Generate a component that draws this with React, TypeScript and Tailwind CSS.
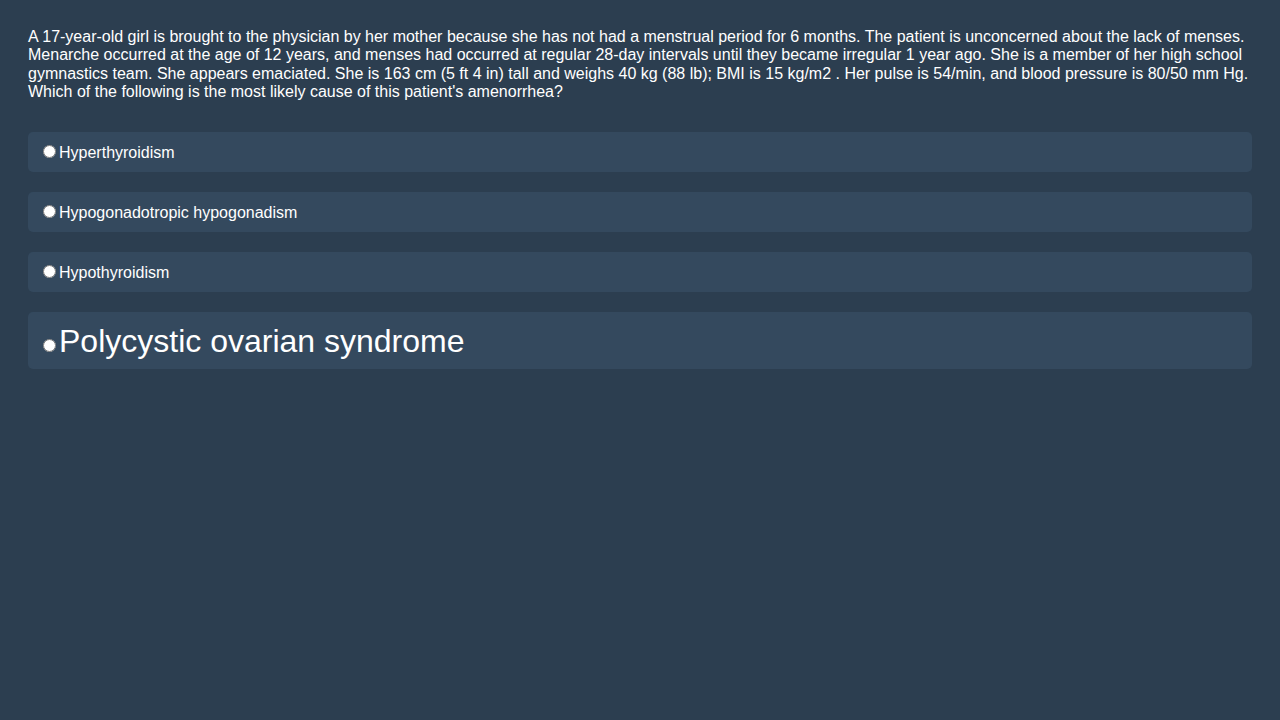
const options = [
  { label: 'Hyperthyroidism', big: false },
  { label: 'Hypogonadotropic hypogonadism', big: false },
  { label: 'Hypothyroidism', big: false },
  { label: 'Polycystic ovarian syndrome', big: true },
];

export default function App() {
  return (
    <div
      className="min-h-screen bg-[#2c3e50] p-7 text-white"
      style={{ fontFamily: '"Liberation Sans", Arial, sans-serif' }}
    >
      <p className="mb-[30px] text-base leading-[18.4px]">
        A 17-year-old girl is brought to the physician by her mother because she has not had a menstrual period for 6
        months. The patient is unconcerned about the lack of menses. Menarche occurred at the age of 12 years, and menses
        had occurred at regular 28-day intervals until they became irregular 1 year ago. She is a member of her high
        school gymnastics team. She appears emaciated. She is 163 cm (5 ft 4 in) tall and weighs 40 kg (88 lb); BMI is 15
        kg/m2 . Her pulse is 54/min, and blood pressure is 80/50 mm Hg. Which of the following is the most likely cause of
        this patient's amenorrhea?
      </p>
      <div>
        {options.map((o) => (
          <label
            key={o.label}
            className={
              'mb-5 block rounded-[5px] bg-[#34495e] px-2.5 pt-[11px] pb-[9px] ' +
              (o.big ? 'text-[32px] leading-[37px]' : 'text-base leading-5')
            }
          >
            <input type="radio" name="answer" className="m-0 ml-[5px] mr-[3px] h-[13px] w-[13px] align-baseline" />
            {o.label}
          </label>
        ))}
      </div>
    </div>
  );
}
